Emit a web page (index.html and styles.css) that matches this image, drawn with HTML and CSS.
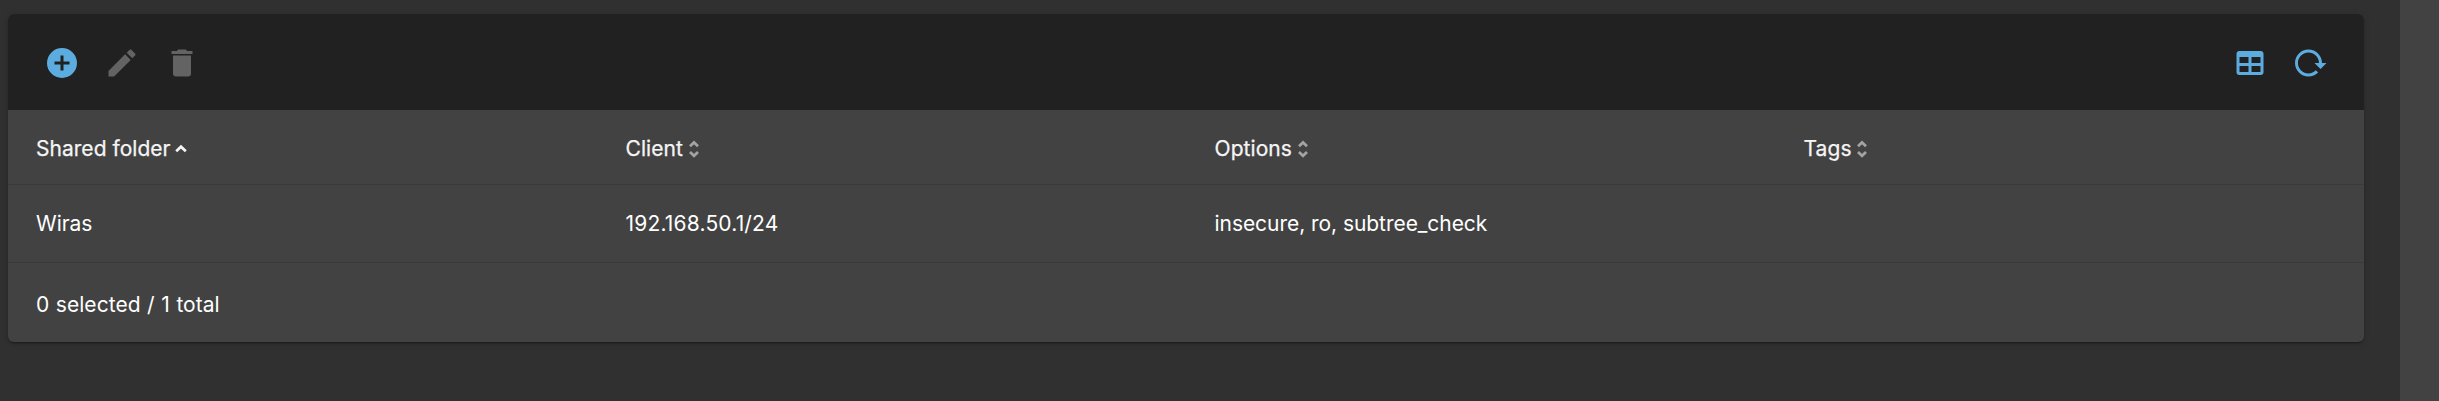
FILE: index.html
```html
<!DOCTYPE html>
<html lang="en">
<head>
<meta charset="utf-8">
<title>Shares</title>
<link rel="stylesheet" href="styles.css">
</head>
<body>
<main class="content">
  <section class="card">
    <div class="toolbar">
      <div class="actions">
        <svg class="icon" viewBox="0 0 24 24"><path d="M17,13H13V17H11V13H7V11H11V7H13V11H17M12,2A10,10 0 0,0 2,12A10,10 0 0,0 12,22A10,10 0 0,0 22,12A10,10 0 0,0 12,2Z"/></svg>
        <svg class="icon disabled" viewBox="0 0 24 24"><path d="M20.71,7.04C21.1,6.65 21.1,6 20.71,5.63L18.37,3.29C18,2.9 17.35,2.9 16.96,3.29L15.12,5.12L18.87,8.87M3,17.25V21H6.75L17.81,9.93L14.06,6.18L3,17.25Z"/></svg>
        <svg class="icon disabled" viewBox="0 0 24 24"><path d="M19,4H15.5L14.5,3H9.5L8.5,4H5V6H19M6,19A2,2 0 0,0 8,21H16A2,2 0 0,0 18,19V7H6V19Z"/></svg>
      </div>
      <div class="actions">
        <svg class="icon" viewBox="0 0 24 24"><path d="M5,4H19A2,2 0 0,1 21,6V18A2,2 0 0,1 19,20H5A2,2 0 0,1 3,18V6A2,2 0 0,1 5,4M5,8V12H11V8H5M13,8V12H19V8H13M5,14V18H11V14H5M13,14V18H19V14H13Z"/></svg>
        <svg class="icon" viewBox="0 0 24 24"><path d="M2 12C2 16.97 6.03 21 11 21C13.39 21 15.68 20.06 17.4 18.4L15.9 16.9C14.63 18.25 12.86 19 11 19C4.76 19 1.64 11.46 6.05 7.05C10.46 2.64 18 5.77 18 12H15L19 16H19.1L23 12H20C20 7.03 15.97 3 11 3C6.03 3 2 7.03 2 12Z"/></svg>
      </div>
    </div>
    <div class="row head">
      <div class="cell sorted">Shared folder<svg class="sort asc" viewBox="0 0 12 18"><path d="M1.2 11.3L6 6.7L10.8 11.3"/></svg></div>
      <div class="cell">Client<svg class="sort" viewBox="0 0 12 18"><path d="M2 6.2L6 2.4L10 6.2M2 12L6 15.8L10 12"/></svg></div>
      <div class="cell">Options<svg class="sort" viewBox="0 0 12 18"><path d="M2 6.2L6 2.4L10 6.2M2 12L6 15.8L10 12"/></svg></div>
      <div class="cell">Tags<svg class="sort" viewBox="0 0 12 18"><path d="M2 6.2L6 2.4L10 6.2M2 12L6 15.8L10 12"/></svg></div>
    </div>
    <div class="row body">
      <div class="cell">Wiras</div>
      <div class="cell address">192.168.50.1/24</div>
      <div class="cell">insecure, ro, subtree_check</div>
      <div class="cell"></div>
    </div>
    <div class="footer">0 selected / 1 total</div>
  </section>
</main>
<aside class="side"></aside>
</body>
</html>
```
FILE: styles.css
```css
* { box-sizing: border-box; }
body {
  margin: 0;
  height: 401px;
  display: flex;
  overflow: hidden;
  background: #303030;
  color: #fff;
  font: 21px/30px Inter, "Liberation Sans", sans-serif;
}
.content { width: 2400px; padding: 14px 36px 0 8px; }
.side { flex: 1; background: #424242; }
.card {
  height: 328px;
  border-radius: 6px;
  overflow: hidden;
  background: #424242;
  box-shadow: 0 3px 1px -2px rgba(0,0,0,.2), 0 2px 2px rgba(0,0,0,.14), 0 1px 6px rgba(0,0,0,.12);
}
.toolbar {
  height: 96px;
  padding: 2px 36px 0;
  display: flex;
  align-items: center;
  justify-content: space-between;
  background: #212121;
}
.actions { display: flex; gap: 24px; }
.icon { width: 36px; height: 36px; fill: #5dacdf; }
.disabled { fill: #636363; }
.row {
  display: grid;
  grid-template-columns: repeat(4, 1fr);
  align-items: center;
  border-bottom: 1px solid #3a3a3a;
}
.head { height: 75px; padding-top: 3px; color: #f5f5f5; letter-spacing: .08px; -webkit-text-stroke: .25px #f5f5f5; }
.body { height: 78px; letter-spacing: -.05px; }
.cell { display: flex; align-items: center; padding-left: 28.5px; }
.sorted { padding-left: 28px; letter-spacing: .03px; }
.body .cell:first-child { padding-left: 28px; }
.address { letter-spacing: .18px; }
.sort {
  width: 12px;
  height: 18px;
  margin-left: 4.5px;
  fill: none;
  stroke: #a3a3a3;
  stroke-width: 2.7;
}
.asc { stroke: #f5f5f5; }
.footer {
  height: 79px;
  padding: 4px 28px 0;
  display: flex;
  align-items: center;
  letter-spacing: .04px;
  word-spacing: .6px;
}
```
